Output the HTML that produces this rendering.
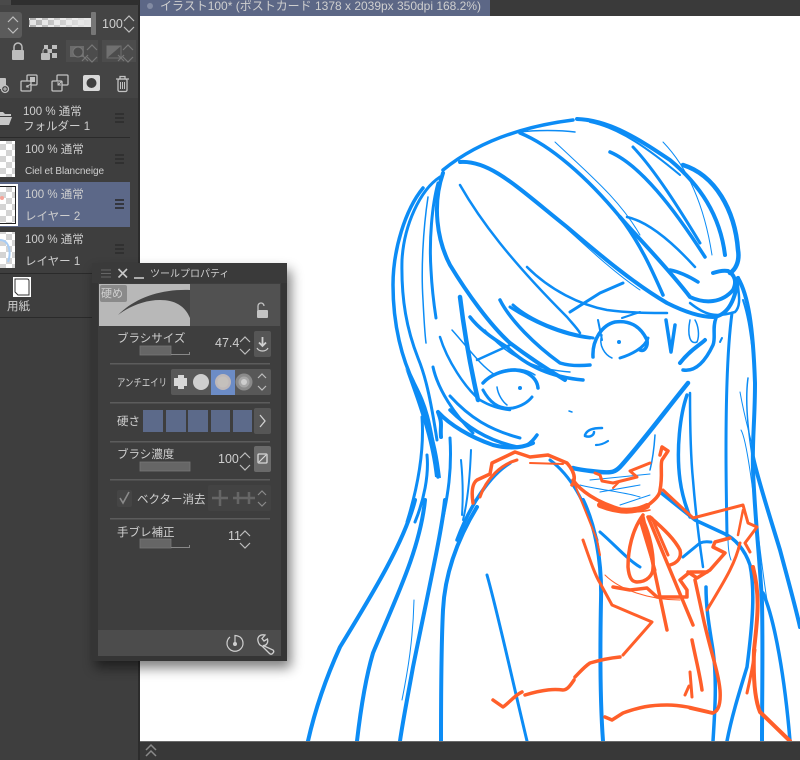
<!DOCTYPE html>
<html><head><meta charset="utf-8"><style>
html,body{margin:0;padding:0;background:#3e3e3e;width:800px;height:760px;overflow:hidden}
svg{display:block;filter:blur(.35px)}
text{font-family:"Liberation Sans","Noto Sans CJK JP",sans-serif;fill:#cfcfcf}
.b path{fill:none;stroke:#0c8cf5;stroke-linecap:round;stroke-linejoin:round}
.o path{fill:none;stroke:#ff5f2a;stroke-linecap:round;stroke-linejoin:round}
.c{fill:none;stroke:#bdbdbd;stroke-width:1.2}
.m{stroke:#2b2b2b;stroke-width:1.4}
</style></head><body>
<svg width="800" height="760" viewBox="0 0 800 760" xmlns="http://www.w3.org/2000/svg">
<defs>
<pattern id="ck" width="12" height="12" patternUnits="userSpaceOnUse"><rect width="12" height="12" fill="#fff"/><rect width="6" height="6" fill="#d4d4d4"/><rect x="6" y="6" width="6" height="6" fill="#d4d4d4"/></pattern>
<pattern id="ck2" width="12" height="10" patternUnits="userSpaceOnUse"><rect width="12" height="10" fill="#e2e2e2"/><rect width="6" height="5" fill="#a8a8a8"/><rect x="6" y="5" width="6" height="5" fill="#a8a8a8"/></pattern>
<linearGradient id="fade"><stop offset="0" stop-color="#fff" stop-opacity="0"/><stop offset="1" stop-color="#e4e4e4"/></linearGradient>
<filter id="sh" x="-20%" y="-10%" width="140%" height="125%"><feGaussianBlur stdDeviation="6"/></filter>
</defs>

<!-- canvas -->
<rect x="140" y="16" width="660" height="726" fill="#fff"/>

<g>
<!-- hair top -->
<g class="b">
<path stroke-width="3.5" d="M443 170C470 148 510 128 573 120"/>
<path stroke-width="1.5" d="M520 132C535 130 560 130 575 132"/>
<path stroke-width="4" d="M577 119C610 120 640 140 670 160C700 185 720 215 725 255"/>
<path stroke-width="2" d="M590 122C620 128 650 150 680 175"/>
<path stroke-width="4.5" d="M683 165C715 175 735 210 738 250C740 262 735 270 730 273"/>
<path stroke-width="1" d="M663 142C690 170 705 210 712 255"/>
<path stroke-width="4" d="M460 162C490 160 517 187 567 227C600 255 633 283 667 303C685 312 700 317 713 317C725 316 735 305 738 278"/>
<path stroke-width="3.500" d="M520 133C550 145 587 177 620 217C640 243 652 270 663 295"/>
<path stroke-width="4" d="M620 217C640 240 667 267 690 297C705 304 722 303 733 290C737 282 735 275 728 271C722 270 716 272 713 273"/>
<path stroke-width="2.5" d="M627 217C650 222 675 245 695 267"/>
<path stroke-width="3.5" d="M610 152C640 165 673 207 705 257"/>
<path stroke-width="3" d="M633 147C655 170 680 210 700 243"/>
<path stroke-width="1" d="M555 142C590 175 620 200 640 235"/>
<path stroke-width="2.5" d="M460 185C480 220 510 260 567 317C572 323 577 328 580 333"/>
<path stroke-width="3" d="M513 305C530 320 560 333 593 338"/>
<path stroke-width="2.5" d="M527 267C550 290 580 305 607 310C630 313 650 313 667 313"/>
<path stroke-width="3" d="M570 312L600 293L623 283"/>
<path stroke-width="3.5" d="M670 270C680 272 690 277 698 282"/>
<path stroke-width="1" d="M548 212C580 240 610 270 640 290"/>
<path stroke-width="2.5" d="M690 303C705 315 715 318 735 312C742 305 738 292 738 285"/>
<!-- left hair -->
<path stroke-width="3.5" d="M423 188C405 210 393 250 393 285C393 325 402 360 415 385C425 405 430 417 438 477"/>
<path stroke-width="3" d="M440 177C420 190 404 225 402 260C401 300 407 330 418 358C425 375 430 395 437 440"/>
<path stroke-width="1.5" d="M428 197C423 230 421 270 423 300C424 320 425 335 426 343"/>
<path stroke-width="3" d="M438 183C432 205 429 240 431 270C432 290 434 305 436 318"/>
<path stroke-width="4" d="M443 173C432 205 437 240 450 265C467 293 490 325 510 343C530 358 545 368 565 380"/>
<path stroke-width="4.5" d="M460 297C464 330 470 365 478 400"/>
<path stroke-width="2.5" d="M477 360L510 345"/>
<path stroke-width="2.5" d="M440 337C447 360 465 388 480 400C490 406 500 409 510 410"/>
<path stroke-width="3" d="M433 367C438 390 455 415 473 433"/>
<path stroke-width="4" d="M438 412C443 425 440 425 441 437M438 412C450 425 470 437 493 445C505 448 520 449 533 443"/>
<path stroke-width="2.5" d="M450 410C462 422 475 432 490 438"/>
<path stroke-width="3" d="M422 417C424 445 420 480 407 522"/>
<path stroke-width="3" d="M427 455C429 475 424 500 415 522"/>
<path stroke-width="3" d="M450 438C452 470 448 495 442 522"/>
<path stroke-width="2" d="M461 460C463 480 463 500 462 515M471 450C470 475 468 500 463 520"/>
<path stroke-width="3.5" d="M510 463C490 475 470 505 457 540"/>
<path stroke-width="1.5" d="M452 330C470 350 480 365 495 375"/>
<!-- long hair bottom -->
<path stroke-width="4" d="M415 500C405 540 375 590 340 647C325 680 315 710 308 741"/>
<path stroke-width="4" d="M425 500C420 550 395 600 373 653C365 680 360 715 357 741"/>
<path stroke-width="4" d="M445 500C442 530 430 583 413 667C408 695 403 720 400 741"/>
<path stroke-width="4" d="M477 507C460 535 445 570 443 610C441 650 441 700 441 741"/>
<path stroke-width="1" d="M414 600C413 640 408 670 402 700"/>
<path stroke-width="3" d="M487 575C497 610 510 670 527 741"/>
<path stroke-width="4" d="M583 500C595 525 602 560 601 600C600 650 600 700 603 741"/>
<path stroke-width="3" d="M550 460C570 475 585 500 597 540"/>
<path stroke-width="3" d="M600 532C615 545 628 560 640 567"/>
<path stroke-width="3" d="M683 557L700 543C705 541 708 542 711 542"/>
<!-- eyes -->
<path stroke-width="3.5" d="M593 357C592 340 602 325 615 322C628 320 640 325 647 340C648 346 645 352 640 350"/>
<path stroke-width="3" d="M620 358C630 355 645 348 648 338"/>
<path stroke-width="1.5" d="M602 335C598 345 605 355 612 358"/>
<path stroke-width="2" d="M598 320L602 340M622 318L640 312"/>
<path stroke-width="3.5" d="M483 383C490 375 503 370 515 370C528 371 537 378 538 388"/>
<path stroke-width="1.5" d="M488 378C505 365 525 368 535 375"/>
<path stroke-width="3" d="M483 390C490 403 500 410 513 408C522 406 528 402 532 397"/>
<path stroke-width="1.5" d="M497 387C498 395 503 402 507 405"/>
<path stroke-width="3.5" d="M450 410C465 425 485 440 517 447C525 447 530 445 537 435"/>
<path stroke-width="3" d="M450 396C470 418 490 430 520 438"/>
<path stroke-width="3.5" d="M470 317C480 330 495 340 507 347C525 365 550 377 583 380"/>
<path stroke-width="3.5" d="M500 300C510 320 535 345 560 363C570 366 580 366 590 365"/>
<path stroke-width="3" d="M510 307C530 320 560 335 590 338"/>
<path stroke-width="1.5" d="M485 330C510 360 540 370 570 372"/>
<!-- nose, right of face -->
<path stroke-width="3.5" d="M666 320L671 352L675 325"/>
<path stroke-width="1.5" d="M690 320C687 335 690 345 697 342C700 335 698 325 695 320"/>
<path stroke-width="4" d="M680 363C690 350 700 345 705 340"/>
<path stroke-width="3.5" d="M683 370C695 372 705 362 713 345C716 338 712 328 716 318"/>
<path stroke-width="2" d="M720 342L722 338"/>
<path stroke-width="4.5" d="M688 383C670 405 640 445 620 467C615 472 612 473 600 472C590 471 580 470 573 468"/>
<path stroke-width="3.5" d="M687 395C680 415 676 450 680 480C682 495 686 507 690 517"/>
<path stroke-width="1.5" d="M655 435C654 450 652 462 650 470"/>
<path stroke-width="2.5" d="M585 435C587 430 592 428 602 428M585 436C590 438 594 435 594 432"/>
<path stroke-width="2.2" d="M596 445C600 445 605 443 608 441"/>
<path stroke-width="1.5" d="M569 411L572 412"/>
<!-- neck lines -->
<path stroke-width="1" d="M580 485C600 490 625 492 640 497M590 480L650 474M600 492L640 485M620 505L650 495"/>
<!-- right long hair -->
<path stroke-width="4" d="M738 278C748 295 753 325 755 383C755 420 752 440 753 470C755 520 760 560 762 603C763 650 762 700 762 741"/>
<path stroke-width="2" d="M743 300C748 315 750 330 752 345"/>
<path stroke-width="4" d="M753 457C758 480 770 517 780 550C788 580 795 605 800 627"/>
<path stroke-width="3.5" d="M763 593C775 620 785 680 790 741"/>
<path stroke-width="1.5" d="M748 378C745 400 748 430 752 455"/>
<path stroke-width="1" d="M740 392C745 420 750 435 752 445M741 430C750 445 760 560 767 600"/>
<path stroke-width="3" d="M732 313C727 350 726 400 726 450C726 490 727 530 727 537"/>
<path stroke-width="1" d="M728 537C728 545 729 555 731 560"/>
<path stroke-width="2.5" d="M690 393C690 430 691 460 693 480C695 505 698 533 703 567"/>
<path stroke-width="3.5" d="M660 492L695 520L723 533C735 538 745 550 750 565C755 590 753 620 747 667C740 690 732 715 727 741"/>
<path stroke-width="3.5" d="M706 587C706 605 708 620 713 650C717 680 715 710 713 741"/>
</g>
<g fill="#0c8cf5">
<circle cx="619" cy="342" r="2"/><circle cx="520" cy="388" r="2"/>
<path d="M405 368C420 395 436 430 441 478L435 477C431 440 420 410 405 368z"/>
</g>

<!-- orange -->
<g class="o">
<path stroke-width="3.5" d="M473 503C471 490 473 483 477 480L490 474L492 463L515 452L530 457L548 455L567 463C573 470 577 478 572 485"/>
<path stroke-width="3" d="M480 497C484 485 490 478 495 473C503 465 510 462 517 460"/>
<path stroke-width="2" d="M530 463L563 464"/>
<path stroke-width="3.5" d="M573 480C580 490 595 502 623 510"/>
<path stroke-width="6" d="M600 505C620 513 635 512 647 506"/>
<path stroke-width="3.500" d="M647 506C655 500 660 495 660 490C663 475 660 465 662 460L668 451L662 447L660 455"/>
<path stroke-width="1.5" d="M590 495C610 510 630 515 650 510"/>
<path stroke-width="3" d="M595 473L600 475L602 481L613 483L637 477L630 471L650 463"/>
<path stroke-width="2" d="M613 488L620 481"/>
<path stroke-width="3" d="M663 490L693 518L743 505L748 523L757 527L745 543L750 552"/>
<path stroke-width="3.5" d="M730 538L715 542L713 547L725 553L710 570L697 578L688 572"/>
<path stroke-width="2.5" d="M743 510L738 535"/>
<path stroke-width="3" d="M740 543C735 565 723 583 707 610"/>
<path stroke-width="4" d="M753 567C760 595 758 615 754 650C753 680 755 700 760 712L790 741"/>
<path stroke-width="3" d="M747 693C750 680 753 665 755 650"/>
<path stroke-width="3.5" d="M695 580L703 617C710 650 718 670 720 690C721 705 718 712 712 713L690 708"/>
<!-- ribbon -->
<path stroke-width="3.5" d="M643 515C632 530 628 550 628 567C629 578 632 582 637 582C647 582 653 575 653 568C654 555 650 535 643 520"/>
<path stroke-width="3.5" d="M650 517C665 530 675 540 680 550C682 558 677 563 670 565"/>
<path stroke-width="3.5" d="M643 517L667 630"/>
<path stroke-width="3.5" d="M648 517L693 625"/>
<path stroke-width="3" d="M640 520L655 570M652 518L668 555"/>
<path stroke-width="3" d="M583 540C590 560 595 575 600 583L612 605L652 622L623 655"/>
<path stroke-width="2" d="M573 480L597 540L600 555"/>
<path stroke-width="3.5" d="M620 657C610 658 600 660 590 663C584 667 580 672 575 677"/>
<path stroke-width="3.5" d="M574 680C570 686 567 690 563 690C555 689 545 689 525 695"/>
<path stroke-width="3.5" d="M522 692C515 695 510 702 503 707L493 700"/>
<path stroke-width="3.5" d="M613 587L630 590L647 588L657 597L687 597L687 590L680 580L690 572L707 572"/>
<path stroke-width="1" d="M605 575C620 590 650 600 680 600"/>
<path stroke-width="3.5" d="M605 717L612 720L623 713C640 707 650 705 667 705C685 705 700 710 713 713"/>
<path stroke-width="3.5" d="M692 640C696 660 700 675 702 690"/>
<path stroke-width="3" d="M690 672L692 697M685 695L689 686"/>
</g>
</g>

<!-- left panel -->
<rect x="0" y="0" width="139" height="760" fill="#3e3e3e"/>
<rect x="138" y="0" width="2" height="760" fill="#2c2c2c"/>
<!-- top strip -->
<rect x="0" y="0" width="139" height="5" fill="#2f2f2f"/>
<rect x="0" y="0" width="11" height="5" fill="#4a4a4a"/>
<rect x="0" y="5" width="138" height="93" fill="#444"/>
<!-- tab bar -->
<rect x="140" y="0" width="660" height="16" fill="#3a3a3a"/>
<rect x="140" y="0" width="350" height="16" fill="#5c6786"/>
<circle cx="150" cy="6" r="3" fill="#828ba3"/>
<text x="160" y="10" font-size="12" fill="#c9ced9" textLength="321" lengthAdjust="spacingAndGlyphs">イラスト100* (ポストカード 1378 x 2039px 350dpi 168.2%)</text>
<!-- bottom bar -->
<rect x="140" y="741" width="660" height="19" fill="#383838"/>
<rect x="140" y="741" width="660" height="1" fill="#6a6a6a"/>
<path d="M146 750L151 745L156 750M146 756L151 751L156 756" fill="none" stroke="#8a8a8a" stroke-width="1.5"/>

<!-- blend row -->
<rect x="-4" y="12" width="26" height="26" rx="3" fill="#5b5b5b"/>
<path class="c" d="M8 22L13 17L18 22M8 28L13 33L18 28"/>
<rect x="29" y="18" width="63" height="9" fill="url(#ck2)"/>
<rect x="29" y="18" width="63" height="9" fill="url(#fade)"/>
<rect x="91" y="12" width="5" height="23" rx="1" fill="#777"/>
<text x="102" y="28" font-size="12.5">100</text>
<path class="c" d="M124 21L129 16L134 21M124 27L129 32L134 27"/>
<!-- lock row -->
<rect x="12" y="50" width="12" height="10" rx="1" fill="#bdbdbd"/>
<path d="M14 50V47a4 4 0 0 1 8 0V50" fill="none" stroke="#bdbdbd" stroke-width="1.5"/>
<rect x="41" y="53" width="9" height="7" rx="1" fill="#bdbdbd"/>
<path d="M43 53V51a2.5 2.5 0 0 1 5 0V53" fill="none" stroke="#bdbdbd" stroke-width="1"/>
<path d="M44 45h4v4h-4zM52 45h5v4h-5zM48 49h4v4h-4zM52 53h5v5h-5z" fill="#bdbdbd"/>
<rect x="66" y="40" width="32" height="22" fill="#4c4c4c"/>
<rect x="102" y="40" width="34" height="22" fill="#4c4c4c"/>
<rect x="70" y="46" width="14" height="11" fill="#6c6c6c"/><circle cx="78" cy="52" r="5" fill="#4c4c4c" stroke="#777"/>
<path d="M87 50L92 45L97 50M87 57L92 62L97 57M82 55l6 6M88 55l-6 6" fill="none" stroke="#777" stroke-width="1.200"/>
<path d="M107 46h14l-14 12z" fill="#707070"/><rect x="107" y="46" width="14" height="12" fill="none" stroke="#707070"/>
<path d="M123 50L128 45L133 50M123 57L128 62L133 57M118 55l6 6M124 55l-6 6" fill="none" stroke="#777" stroke-width="1.200"/>
<!-- action row -->
<g fill="none" stroke="#c2c2c2" stroke-width="1.300">
<rect x="-3" y="78" width="9" height="11" rx="1" fill="#c2c2c2" stroke="none"/>
<circle cx="5" cy="89" r="3.5" fill="#444"/>
<path d="M3 89h4M5 87v4" stroke-width="1"/>
<rect x="27" y="75" width="10" height="10" rx="1"/>
<rect x="21" y="81" width="10" height="10" rx="1" fill="#444"/>
<rect x="30" y="77" width="5" height="5" fill="#c2c2c2" stroke="none"/>
<path d="M31 84l-5 3M27 85v2h2" stroke-width="1"/>
<rect x="57" y="75" width="11" height="10" rx="1"/>
<rect x="52" y="81" width="10" height="10" rx="1" fill="#444"/>
<path d="M62 81l-4 4M58 82v3h3" stroke-width="1"/>
<path d="M116 79h13M120 79v-2.500h5v2.500"/>
<rect x="118" y="79" width="9" height="12.500" rx="1.500"/>
<path d="M120.500 82v7M122.500 82v7M124.500 82v7" stroke-width="1"/>
</g>
<rect x="83" y="75" width="17" height="16" rx="2" fill="#d8d8d8"/><circle cx="91.5" cy="83" r="5" fill="#3e3e3e"/>

<!-- layers -->
<rect x="0" y="98" width="138" height="40" fill="#3e3e3e"/>
<path d="M-4 112h7l2 2h6v2H-4z" fill="#c8c8c8"/>
<path d="M-4 117h16l-3 8H-4z" fill="#c8c8c8"/>
<text x="23" y="115" font-size="11.5">100 % 通常</text>
<text x="23" y="130" font-size="11.5">フォルダー 1</text>
<path class="m" d="M115 114h9M115 118h9M115 122h9"/>
<rect x="0" y="137" width="130" height="1" fill="#2a2a2a"/>

<rect x="0" y="141" width="15" height="36" fill="url(#ck)"/>
<text x="25" y="153" font-size="11.5">100 % 通常</text>
<text x="25" y="174" font-size="10" fill="#bcbcbc" textLength="79" lengthAdjust="spacing">Ciel et Blancneige</text>
<path class="m" d="M115 155h9M115 159h9M115 163h9"/>

<rect x="0" y="182" width="130" height="45" fill="#5c6888"/>
<rect x="-2" y="184" width="20" height="42" fill="#fff"/>
<rect x="0" y="186" width="16" height="38" fill="#222"/>
<rect x="0" y="187" width="15" height="36" fill="url(#ck)"/>
<circle cx="2" cy="198" r="2" fill="#f6a59a"/>
<text x="25" y="198" font-size="11.5" fill="#d0d4dd">100 % 通常</text>
<text x="25" y="220" font-size="11.5" fill="#d0d4dd">レイヤー 2</text>
<path d="M115 200h9M115 204h9M115 208h9" stroke="#262626" stroke-width="1.400"/>

<rect x="0" y="232" width="15" height="36" fill="url(#ck)"/>
<path d="M0 240C8 240 12 250 8 262" fill="none" stroke="#a8cdf5" stroke-width="2"/>
<text x="25" y="243" font-size="11.5">100 % 通常</text>
<text x="25" y="265" font-size="11.5">レイヤー 1</text>
<path class="m" d="M115 245h9M115 249h9M115 253h9"/>
<rect x="0" y="273" width="130" height="1" fill="#2a2a2a"/>

<rect x="13" y="277" width="18" height="20" fill="#fff"/>
<path d="M15 279h12q2 0 2 2v14h-11l-3-3z" fill="#fff" stroke="#333" stroke-width="1"/>
<text x="7" y="310" font-size="11.5" fill="#c0c0c0">用紙</text>
<rect x="0" y="317" width="92" height="1" fill="#2a2a2a"/>

<!-- tool palette -->
<rect x="95" y="270" width="196" height="398" fill="#000" opacity=".5" filter="url(#sh)"/>
<rect x="92" y="263" width="195" height="398" fill="#353535"/>
<rect x="98" y="266" width="183" height="390" fill="#3e3e3e"/>
<rect x="92" y="263" width="195" height="20" fill="#3a3a3a"/>
<path d="M101 270h10M101 273.500h10M101 277h10" stroke="#666" stroke-width="1"/>
<path d="M118.500 269L127 277.500M127 269L118.500 277.500" stroke="#c8c8c8" stroke-width="1.600"/>
<path d="M134 278h10" stroke="#c8c8c8" stroke-width="1.600"/>
<text x="150" y="277" font-size="10" fill="#8b8b8b">ツールプロパティ</text>

<rect x="99" y="284" width="91" height="42" fill="#b8b8b8"/>
<rect x="190" y="284" width="90" height="42" fill="#515151"/>
<path d="M118 315C135 298 160 289 190 290V318C185 306 175 300 160 300C145 300 130 306 118 315z" fill="#454545"/>
<rect x="100" y="285" width="27" height="17" rx="2" fill="#8a8a8a"/>
<text x="101" y="297" font-size="11" fill="#dcdcdc">硬め</text>
<rect x="257" y="310" width="11" height="8" rx="1" fill="#c4c4c4"/>
<path d="M258 310V306a3 3 0 0 1 6 0" fill="none" stroke="#c4c4c4" stroke-width="1.300"/>

<!-- brush size -->
<text x="117" y="342" font-size="11.5" fill="#c6c6c6">ブラシサイズ</text>
<rect x="140" y="346" width="31" height="9" fill="#666"/><rect x="140" y="346" width="31" height="9" fill="none" stroke="#777" stroke-width=".8"/>
<path d="M171 354.500h18.500V352" fill="none" stroke="#888"/>
<text x="215" y="347" font-size="12.5" fill="#dadada">47.4</text>
<path class="c" d="M240 342L245 337L250 342M240 349L245 354L250 349"/>
<rect x="254" y="331" width="17" height="26" rx="2" fill="#565656"/>
<path d="M262.500 337V346M259 342.500L262.500 346L266 342.500" fill="none" stroke="#d0d0d0" stroke-width="1.800"/>
<path d="M257 348C259 352 266 352 268 348" fill="none" stroke="#d0d0d0" stroke-width="1.200"/>
<rect x="110" y="363" width="160" height="1.500" fill="#5c5c5c"/>

<!-- antialias -->
<text x="117" y="386" font-size="10.5" fill="#bfbfbf" textLength="50" lengthAdjust="spacingAndGlyphs">アンチエイリ</text>
<rect x="171" y="369" width="100" height="26" rx="2" fill="#585858"/>
<rect x="211" y="370" width="24" height="25" fill="#6c8cc6"/>
<path d="M178 375h6v3h3v8h-3v3h-6v-3h-4v-8h4z" fill="#d8d8d8"/>
<circle cx="201" cy="382" r="8" fill="#cfcfcf"/>
<circle cx="223" cy="382" r="8" fill="#cdbfb6" opacity=".85"/>
<circle cx="223" cy="382" r="5.5" fill="#c4c0bc"/>
<circle cx="244" cy="382" r="8.5" fill="#8a8a8a"/>
<circle cx="244" cy="382" r="5.5" fill="#a6a6a6"/>
<circle cx="244" cy="382" r="3" fill="#cdcdcd"/>
<path class="c" d="M258 378L262 374L266 378M258 386L262 390L266 386"/>
<rect x="110" y="402" width="160" height="1.500" fill="#5c5c5c"/>

<!-- hardness -->
<text x="117" y="425" font-size="11.5" fill="#c6c6c6">硬さ</text>
<g fill="#5c6a8a"><rect x="143" y="410" width="20" height="22"/><rect x="166" y="410" width="20" height="22"/><rect x="188" y="410" width="20" height="22"/><rect x="211" y="410" width="19" height="22"/><rect x="233" y="410" width="19" height="22"/></g>
<rect x="254" y="408" width="17" height="26" rx="2" fill="#565656"/>
<path d="M260 415L265 421L260 427" fill="none" stroke="#d0d0d0" stroke-width="1.300"/>
<rect x="110" y="441" width="160" height="1.500" fill="#5c5c5c"/>

<!-- density -->
<text x="117" y="458" font-size="11.5" fill="#c6c6c6">ブラシ濃度</text>
<rect x="140" y="462" width="50" height="9" fill="#666" stroke="#777" stroke-width=".8"/>
<text x="218" y="463" font-size="12.5" fill="#d8d8d8">100</text>
<path class="c" d="M240 458L245 453L250 458M240 465L245 470L250 465"/>
<rect x="254" y="446" width="17" height="26" rx="2" fill="#6a6a6a"/>
<rect x="258" y="454" width="9" height="9" rx="1" fill="none" stroke="#d8d8d8" stroke-width="1.300"/>
<path d="M259 462L266 455" stroke="#d8d8d8" stroke-width="1.200"/>
<rect x="110" y="479" width="160" height="1.500" fill="#5c5c5c"/>

<!-- vector erase -->
<rect x="117" y="490" width="15" height="17" rx="2" fill="#454545"/>
<path d="M120 498L123 503L129 492" fill="none" stroke="#8a8a8a" stroke-width="1.600"/>
<text x="137" y="503" font-size="11.5" fill="#7d7d7d">ベクター消去</text>
<rect x="208" y="485" width="63" height="26" rx="2" fill="#434343"/>
<path d="M212 498h16M220 490v16M233 498h22M238 492v12M249 492v12" stroke="#666" stroke-width="2.500"/>
<path class="c" style="stroke:#8a8a8a" d="M258 495L262 491L266 495M258 502L262 506L266 502"/>
<rect x="110" y="518" width="160" height="1.500" fill="#5c5c5c"/>

<!-- stabilization -->
<text x="117" y="536" font-size="11.5" fill="#c6c6c6">手ブレ補正</text>
<rect x="140" y="539" width="31" height="9" fill="#666" stroke="#777" stroke-width=".8"/>
<path d="M171 547.500h18.500V545" fill="none" stroke="#888"/>
<text x="228" y="540" font-size="12.5" fill="#dadada">11</text>
<path class="c" d="M240 536L245 531L250 536M240 543L245 548L250 543"/>

<!-- bottom -->
<rect x="98" y="630" width="183" height="26" fill="#4c4c4c"/>
<g fill="none" stroke="#cfcfcf" stroke-width="1.200">
<path d="M230 637A8 8 0 1 0 240 637C238 636 236 635.500 235 635.500V644"/>
<circle cx="235" cy="644" r="1.400" fill="#cfcfcf"/>
<path d="M258 641C257 637 260 634 265 635L262 638.500L264 641L267.500 639C268.500 643 266 646 263 645.500L273 650C274 651 274 652 273 653C272 654.500 270.500 654.500 269.500 653.500L262 646C260 645.500 258.500 643.500 258 641z" stroke-width="1.300"/>
</g>
</svg>
</body></html>
